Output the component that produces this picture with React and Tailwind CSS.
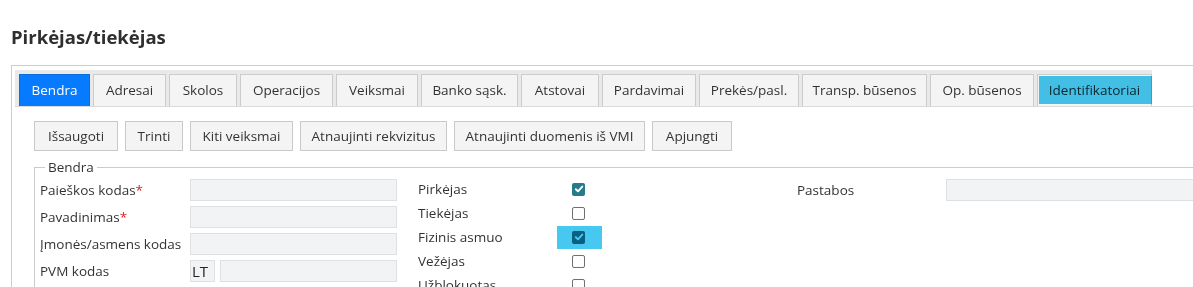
import React from "react";

const tabs = [
  { label: "Bendra", w: "w-[71px]", active: true },
  { label: "Adresai", w: "w-[73px]" },
  { label: "Skolos", w: "w-[68px]" },
  { label: "Operacijos", w: "w-[93px]" },
  { label: "Veiksmai", w: "w-[82px]" },
  { label: "Banko sąsk.", w: "w-[97px]" },
  { label: "Atstovai", w: "w-[78px]" },
  { label: "Pardavimai", w: "w-[94px]" },
  { label: "Prekės/pasl.", w: "w-[100px]" },
  { label: "Transp. būsenos", w: "w-[125px]" },
  { label: "Op. būsenos", w: "w-[104px]" },
  { label: "Identifikatoriai", w: "w-[115px]", marked: true },
];

const buttons = [
  { label: "Išsaugoti", w: "w-[84px]" },
  { label: "Trinti", w: "w-[58px]" },
  { label: "Kiti veiksmai", w: "w-[103px]" },
  { label: "Atnaujinti rekvizitus", w: "w-[147px]" },
  { label: "Atnaujinti duomenis iš VMI", w: "w-[191px]" },
  { label: "Apjungti", w: "w-[80px]" },
];

function Box({ className = "" }) {
  return (
    <div
      className={`h-[22px] border border-[#dde1e1] bg-[#f2f3f4] ${className}`}
    />
  );
}

function Check({ checked, marked }) {
  return (
    <span className="relative inline-flex h-[13px] w-[13px]">
      {checked ? (
        <span className="flex h-[13px] w-[13px] items-center justify-center rounded-[2px] bg-[#267a8a]">
          <svg width="10" height="10" viewBox="0 0 10 10">
            <path
              d="M1.8 5.2 L4 7.3 L8.3 2.6"
              fill="none"
              stroke="white"
              strokeWidth="1.9"
              strokeLinecap="round"
              strokeLinejoin="round"
            />
          </svg>
        </span>
      ) : (
        <span className="h-[13px] w-[13px] rounded-[2px] border-[1.5px] border-[#707070] bg-white" />
      )}
      {marked && (
        <span className="absolute left-[-15px] top-[-5px] h-[23px] w-[45px] bg-[#46c8f0] mix-blend-multiply" />
      )}
    </span>
  );
}

export default function App() {
  return (
    <div className="h-[287px] w-[1193px] overflow-hidden bg-white font-['Open_Sans',sans-serif] text-[#333]">
      <h1 className="pl-[11px] pt-[24px] text-[18.5px] font-bold leading-[26px] text-[#2f2f2f]">
        Pirkėjas/tiekėjas
      </h1>

      <div className="ml-[11px] mt-[15px] w-[1240px] border-l border-t border-[#cdcdcd] pl-[3px] pt-[4px]">
        <div className="border-b border-[#dadada]">
          <div className="inline-flex gap-[3px] bg-[#e9e9e9] pl-[4px] pt-[4px]">
            {tabs.map((t) => (
              <div
                key={t.label}
                className={`relative flex h-[32px] items-center justify-center border border-b-0 text-[13.5px] ${t.w} ${
                  t.active
                    ? "border-[#0a6ee0] bg-[#067bff] text-white"
                    : "border-[#cccccc] bg-[#f4f4f4] text-[#333]"
                }`}
              >
                {t.label}
                {t.marked && (
                  <span className="absolute bottom-[2px] left-[1px] right-[-1px] top-[1px] bg-[#46c8f0] mix-blend-multiply" />
                )}
              </div>
            ))}
          </div>
        </div>

        <div className="pl-[19px] pt-[14px]">
          <div className="flex gap-[7px]">
            {buttons.map((b) => (
              <div
                key={b.label}
                className={`flex h-[30px] items-center justify-center border border-[#c9c9c9] bg-[#f4f4f4] text-[13.5px] text-[#333] ${b.w}`}
              >
                {b.label}
              </div>
            ))}
          </div>

          <fieldset className="mt-[7px] border border-[#c8cccc] pb-6 pl-[5px] pt-[3px]">
            <legend className="ml-[5px] px-[3px] text-[13.5px] leading-[18px] text-[#333]">
              Bendra
            </legend>
            <div className="flex text-[13.5px]">
              <div className="flex flex-col gap-[5px]">
                <div className="flex h-[22px] items-center">
                  <span className="w-[150px]">
                    Paieškos kodas<span className="text-[#e02020]">*</span>
                  </span>
                  <Box className="w-[207px]" />
                </div>
                <div className="flex h-[22px] items-center">
                  <span className="w-[150px]">
                    Pavadinimas<span className="text-[#e02020]">*</span>
                  </span>
                  <Box className="w-[207px]" />
                </div>
                <div className="flex h-[22px] items-center">
                  <span className="w-[150px]">Įmonės/asmens kodas</span>
                  <Box className="w-[207px]" />
                </div>
                <div className="flex h-[22px] items-center">
                  <span className="w-[150px]">PVM kodas</span>
                  <div className="flex h-[22px] w-[25px] items-center border border-[#dde1e1] bg-[#f2f3f4] pl-[1px] text-[15px] text-[#222]">
                    LT
                  </div>
                  <Box className="ml-[5px] w-[177px]" />
                </div>
              </div>

              <div className="-mt-[2px] ml-[21px] flex flex-col">
                {[
                  ["Pirkėjas", true, false],
                  ["Tiekėjas", false, false],
                  ["Fizinis asmuo", true, true],
                  ["Vežėjas", false, false],
                  ["Užblokuotas", false, false],
                ].map(([l, c, m]) => (
                  <div key={l} className="flex h-[24px] items-center">
                    <span className="w-[154px]">{l}</span>
                    <Check checked={c} marked={m} />
                  </div>
                ))}
              </div>

              <div className="ml-[212px] flex h-[22px] items-center">
                <span className="w-[149px]">Pastabos</span>
                <Box className="w-[300px]" />
              </div>
            </div>
          </fieldset>
        </div>
      </div>
    </div>
  );
}
